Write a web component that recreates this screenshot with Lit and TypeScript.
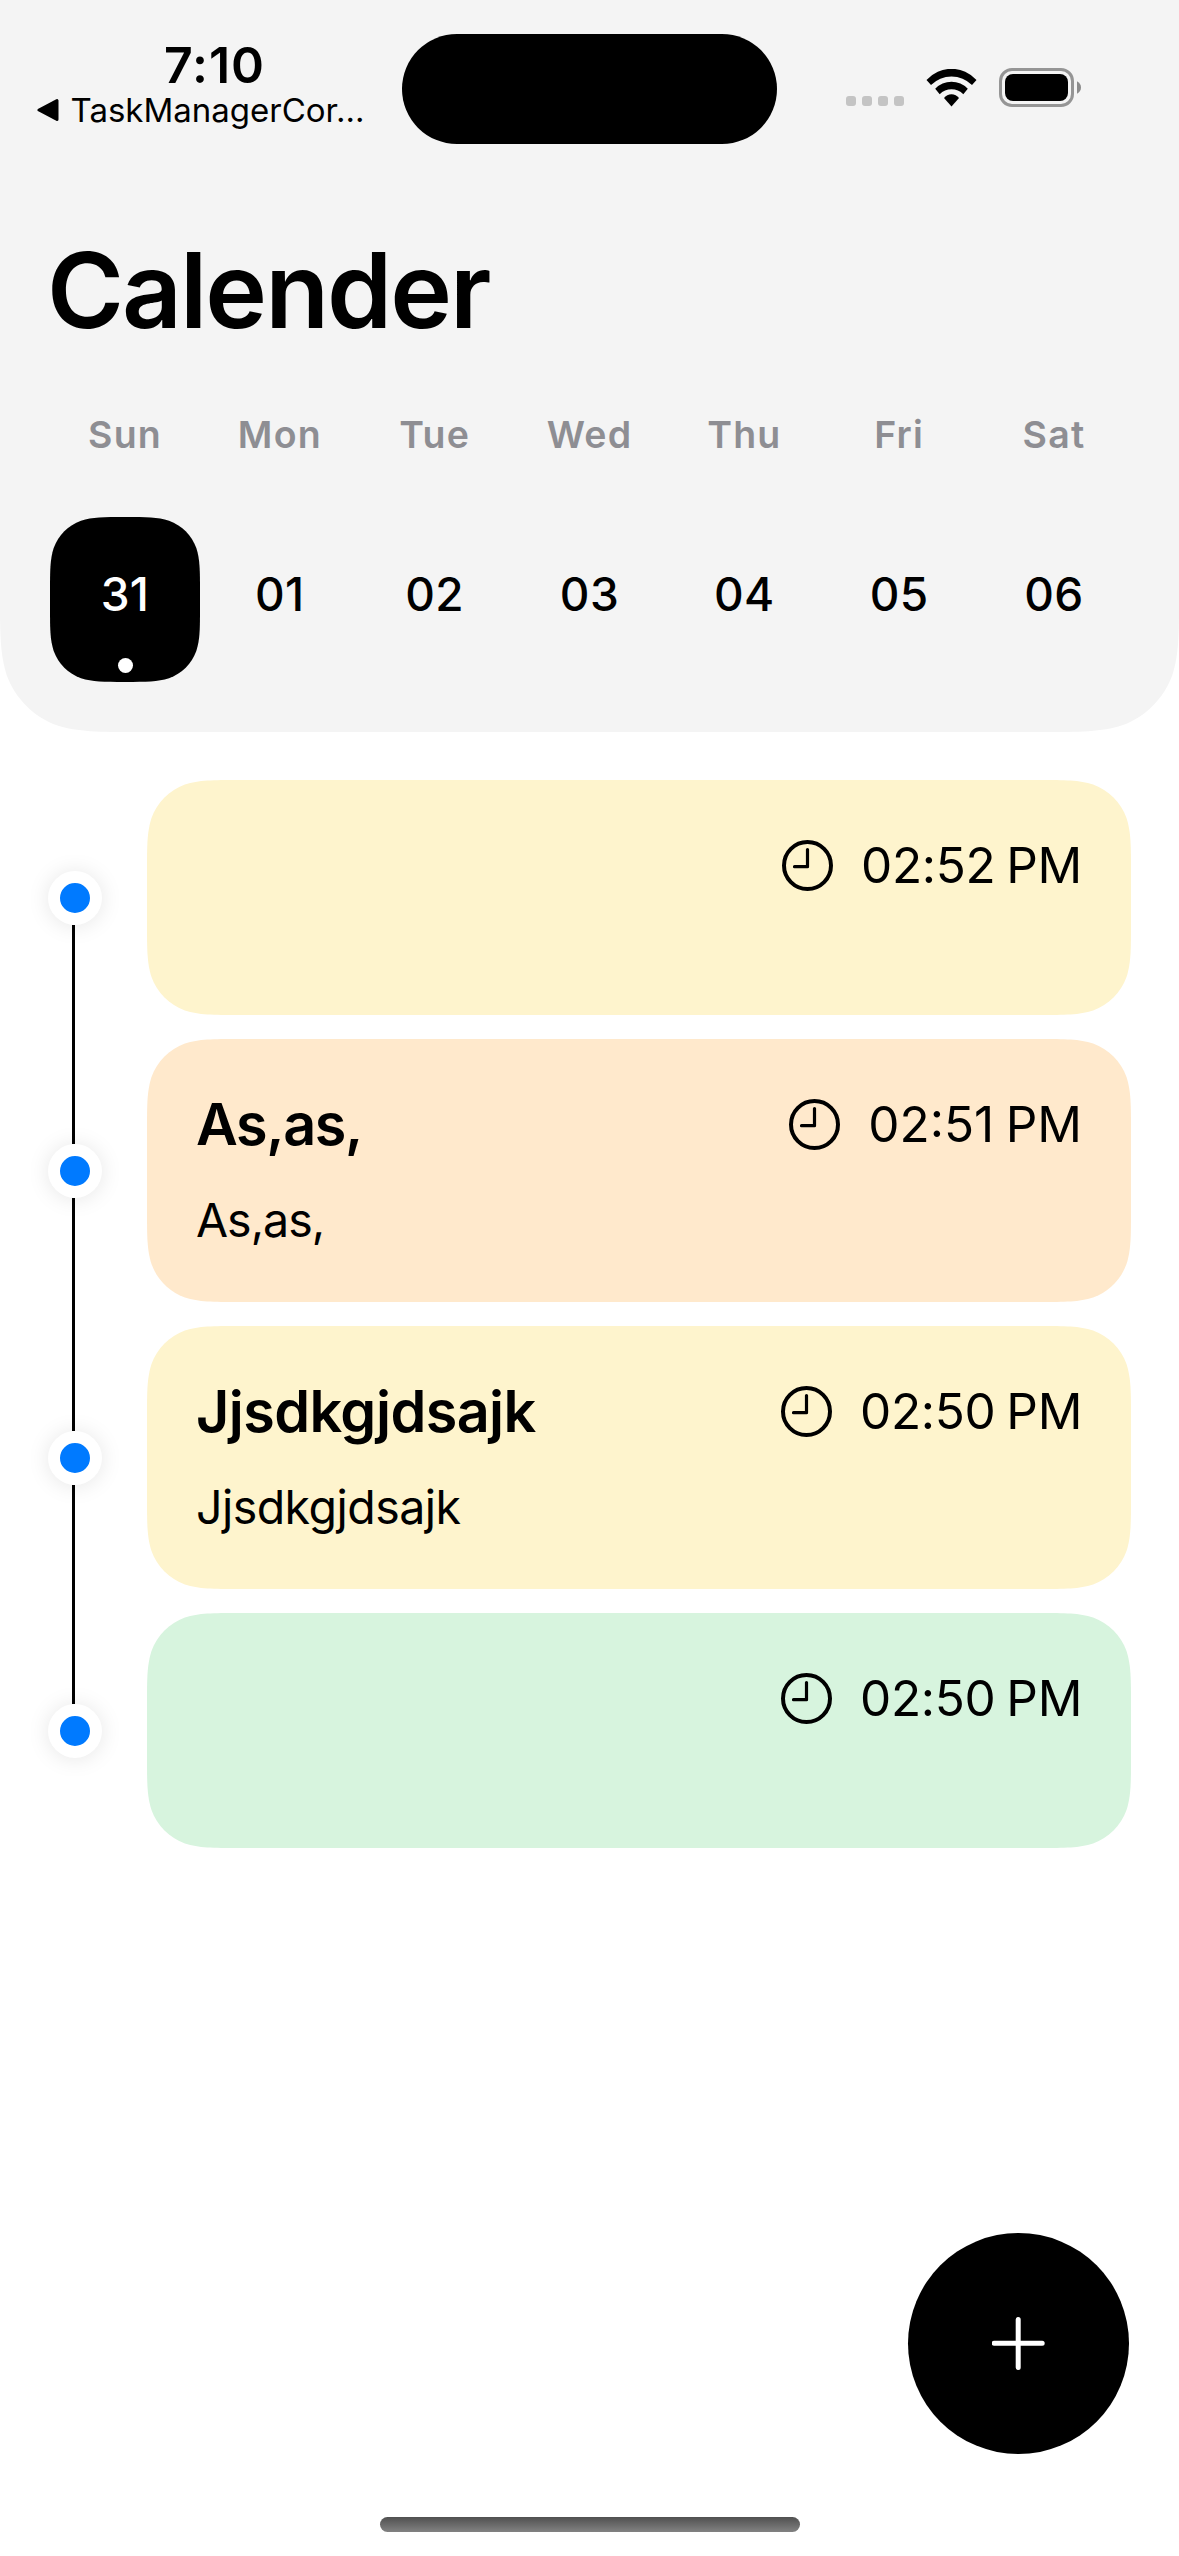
import { LitElement, html, svg, css, unsafeCSS, nothing } from "lit";
import { customElement, property } from "lit/decorators.js";
import { styleMap } from "lit/directives/style-map.js";

/** Outline of a w×h box with continuous-curvature corners of nominal radius r. */
function squircle(w: number, h: number, r: number, topCorners = true): string {
  const n = (v: number) => v.toFixed(2);
  const corner = (X: number, Y: number, ux: number, uy: number, vx: number, vy: number) => {
    // (ux,uy): edge we arrive along, measured back from the corner; (vx,vy): edge we leave along
    const p = (a: number, b: number) =>
      `${n(X + (ux * a + vx * b) * r)} ${n(Y + (uy * a + vy * b) * r)}`;
    return (
      `L${p(1.52866, 0)}C${p(1.08849, 0)} ${p(0.86841, 0)} ${p(0.63149, 0.07491)}` +
      `C${p(0.37282, 0.16906)} ${p(0.16906, 0.37282)} ${p(0.07491, 0.63149)}` +
      `C${p(0, 0.86841)} ${p(0, 1.08849)} ${p(0, 1.52866)}`
    );
  };
  const top = topCorners
    ? `M${n(w / 2)} 0${corner(w, 0, -1, 0, 0, 1)}`
    : `M0 0L${w} 0`;
  const bottom = corner(w, h, 0, -1, -1, 0) + corner(0, h, 1, 0, 0, -1);
  const close = topCorners ? corner(0, 0, 0, 1, 1, 0) : "";
  return `path("${top}${bottom}${close}Z")`;
}

const clip = (w: number, h: number, r: number, top = true) => unsafeCSS(squircle(w, h, r, top));

interface Task {
  title: string;
  note: string;
  time: string;
  tone: "yellow" | "orange" | "green";
}

const TASKS: Task[] = [
  { title: "", note: "", time: "02:52 PM", tone: "yellow" },
  { title: "As,as,", note: "As,as,", time: "02:51 PM", tone: "orange" },
  { title: "Jjsdkgjdsajk", note: "Jjsdkgjdsajk", time: "02:50 PM", tone: "yellow" },
  { title: "", note: "", time: "02:50 PM", tone: "green" },
];

const titleTracking = (s: string) => (s.includes(",") ? "-1.4px" : "-0.6px");
const noteTracking = (s: string) => (s.includes(",") ? "-1px" : "-0.55px");
const timeTracking = (s: string) => (s.includes("1") ? "0px" : "-0.35px");

const DAYS = [
  ["Sun", "31"],
  ["Mon", "01"],
  ["Tue", "02"],
  ["Wed", "03"],
  ["Thu", "04"],
  ["Fri", "05"],
  ["Sat", "06"],
];

@customElement("status-bar")
class StatusBar extends LitElement {
  static styles = css`
    :host {
      display: grid;
      grid-template-columns: 402px 375px 402px;
      height: 177px;
      align-items: start;
    }
    .left {
      padding-top: 40px;
    }
    .clock {
      margin-left: 26px;
      width: 377px;
      font-size: 50px;
      letter-spacing: 0.9px;
      line-height: 50px;
      font-weight: 600;
      text-align: center;
    }
    .back {
      display: flex;
      align-items: center;
      gap: 10.5px;
      padding-left: 37px;
      font-size: 33px;
      line-height: 40px;
      white-space: nowrap;
    }
    .island {
      margin-top: 33.5px;
      height: 110.5px;
      border-radius: 56px;
      background: #000;
    }
    .right {
      display: flex;
      align-items: flex-end;
      padding: 68px 0 0 69px;
    }
    .dots {
      display: flex;
      gap: 6px;
      margin: 0 22px 1px 0;
    }
    .dots i {
      width: 10px;
      height: 10px;
      border-radius: 3px;
      background: #c4c4c4;
    }
    .wifi {
      margin-right: 22px;
    }
    svg {
      display: block;
    }
  `;

  render() {
    return html`
      <div class="left">
        <div class="clock">7:10</div>
        <div class="back">
          <svg width="23" height="24" viewBox="0 0 23 24">
            <path d="M2 12 20 2.6V21.4Z" stroke="#000" stroke-width="3" stroke-linejoin="round" />
          </svg>
          <span class="app">TaskManagerCor...</span>
        </div>
      </div>
      <div class="island"></div>
      <div class="right">
        <div class="dots"><i></i><i></i><i></i><i></i></div>
        <svg class="wifi" width="51" height="38" viewBox="0 0 51 38">
          <path d="M.5 11A33.5 33.5 0 0 1 50.5 11L46 16A29 29 0 0 0 5 16Z" />
          <path d="M9.2 19.7A22.5 22.5 0 0 1 41.8 19.7L37.3 25.3A16.4 16.4 0 0 0 13.7 25.3Z" />
          <path d="M18 29A9.4 9.4 0 0 1 33 29L25.5 37.4Z" />
        </svg>
        <svg width="83" height="39" viewBox="0 0 83 39">
          <rect x="1.5" y="1.5" width="72" height="36" rx="11.5" fill="none" stroke="#959595" stroke-width="3" />
          <rect x="6" y="6" width="63" height="27" rx="8" />
          <path d="M78 13.3Q82 15.5 82 19.5T78 25.7Z" fill="#8c8c8c" />
        </svg>
      </div>
    `;
  }
}

@customElement("week-strip")
class WeekStrip extends LitElement {
  static styles = css`
    :host {
      display: flex;
      justify-content: space-between;
      padding: 0 50px;
    }
    .day {
      width: 150px;
      display: flex;
      flex-direction: column;
      gap: 59.5px;
    }
    .name {
      font-size: 37.5px;
      line-height: 46px;
      font-weight: 600;
      color: #8e8e93;
      text-align: center;
      letter-spacing: 1.2px;
    }
    .tile {
      box-sizing: border-box;
      height: 165px;
      padding: 52px 0 9px;
      display: flex;
      flex-direction: column;
      align-items: center;
      justify-content: space-between;
      font-size: 46px;
      line-height: 50px;
      font-weight: 500;
      letter-spacing: 0.4px;
    }
    .selected {
      background: #000;
      color: #fff;
      clip-path: ${clip(150, 165, 49)};
    }
    .mark {
      width: 15px;
      height: 15px;
      border-radius: 50%;
      background: #fff;
    }
  `;

  render() {
    return DAYS.map(
      ([name, date], i) => html`
        <div class="day">
          <div class="name">${name}</div>
          <div class="tile ${i === 0 ? "selected" : ""}">
            <span>${date}</span>
            ${i === 0 ? html`<span class="mark"></span>` : nothing}
          </div>
        </div>
      `
    );
  }
}

const clockIcon = svg`
  <circle cx="25.5" cy="25.5" r="23.5" stroke-width="4" />
  <path d="M25.5 9.5V26.7H12.5" stroke-width="3.2" />
`;

@customElement("task-row")
class TaskRow extends LitElement {
  @property({ attribute: false }) task!: Task;
  @property({ type: Boolean }) first = false;
  @property({ type: Boolean }) last = false;

  static styles = css`
    :host {
      display: grid;
      grid-template-columns: 54px 984px;
      column-gap: 45px;
    }
    .rail {
      display: flex;
      flex-direction: column;
    }
    .line {
      flex: 1;
      width: 3px;
      margin-left: 24px;
      background: #000;
    }
    .line.hidden {
      background: none;
    }
    .dot {
      box-sizing: border-box;
      width: 54px;
      height: 54px;
      border-radius: 50%;
      border: 12px solid #fff;
      background: #007aff;
      box-shadow: 0 1px 22px rgba(0, 0, 0, 0.1);
    }
    .card {
      box-sizing: border-box;
      margin: 12px 0;
      padding: 50px 49px 54px 49px;
      height: 263px;
      clip-path: ${clip(984, 263, 60)};
    }
    .card.short {
      height: 235px;
      clip-path: ${clip(984, 235, 60)};
    }
    .yellow {
      background: #fef4cd;
    }
    .orange {
      background: #ffe9cc;
    }
    .green {
      background: #d7f4de;
    }
    .head {
      display: flex;
      align-items: center;
      justify-content: space-between;
      height: 71px;
    }
    .title {
      font-size: 57.5px;
      line-height: 70px;
      font-weight: 600;
      padding-bottom: 2px;
    }
    .when {
      display: flex;
      align-items: center;
      gap: 28px;
      font-size: 49.5px;
      line-height: 60px;
    }
    .time {
      padding-bottom: 2px;
      word-spacing: -2.5px;
    }
    .note {
      margin-top: 32px;
      font-size: 46.5px;
      line-height: 56px;
    }
  `;

  render() {
    const t = this.task;
    return html`
      <div class="rail">
        <div class="line ${this.first ? "hidden" : ""}"></div>
        <div class="dot"></div>
        <div class="line ${this.last ? "hidden" : ""}"></div>
      </div>
      <div class="card ${t.tone} ${t.note ? "" : "short"}">
        <div class="head">
          <span class="title" style=${styleMap({ letterSpacing: titleTracking(t.title) })}>${t.title}</span>
          <span class="when">
            <svg width="51" height="51" viewBox="0 0 51 51" fill="none" stroke="#000" stroke-linecap="round" stroke-linejoin="round">
              ${clockIcon}
            </svg>
            <span class="time" style=${styleMap({ letterSpacing: timeTracking(t.time) })}>${t.time}</span>
          </span>
        </div>
        ${t.note
          ? html`<div class="note" style=${styleMap({ letterSpacing: noteTracking(t.note) })}>${t.note}</div>`
          : nothing}
      </div>
    `;
  }
}

@customElement("app-root")
class AppRoot extends LitElement {
  static styles = css`
    :host {
      display: block;
      position: relative;
      width: 1179px;
      height: 2556px;
      overflow: hidden;
      background: #fff;
      color: #000;
      font-family: Inter, "Liberation Sans", sans-serif;
    }
    header {
      box-sizing: border-box;
      height: 732px;
      background: #f4f4f4;
      clip-path: ${clip(1179, 732, 90, false)};
    }
    h1 {
      margin: 53px 0 61.5px;
      padding-left: 47px;
      font-size: 104.5px;
      line-height: 120px;
      font-weight: 600;
      letter-spacing: -2px;
    }
    main {
      padding: 36px 48px 0;
    }
    .add {
      position: absolute;
      right: 50px;
      bottom: 102px;
      width: 221px;
      height: 221px;
      padding: 0;
      border: 0;
      border-radius: 50%;
      background: #000;
      display: grid;
      place-items: center;
    }
    .home {
      position: absolute;
      left: 380px;
      bottom: 24px;
      width: 420px;
      height: 15px;
      border-radius: 8px;
      background: linear-gradient(#505050, #828282);
    }
  `;

  render() {
    return html`
      <header>
        <status-bar></status-bar>
        <h1>Calender</h1>
        <week-strip></week-strip>
      </header>
      <main>
        ${TASKS.map(
          (t, i) => html`<task-row .task=${t} ?first=${i === 0} ?last=${i === TASKS.length - 1}></task-row>`
        )}
      </main>
      <button class="add" aria-label="Add">
        <svg width="53" height="53" viewBox="0 0 53 53" stroke="#fff" stroke-width="5" stroke-linecap="round">
          <path d="M26.2 2.5V50.5M2.2 26.2H50.2" />
        </svg>
      </button>
      <div class="home"></div>
    `;
  }
}
